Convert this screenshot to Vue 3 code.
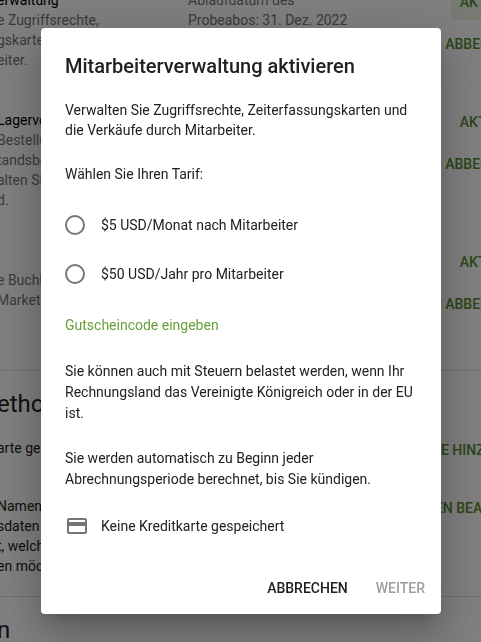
<script setup>
import { ref } from 'vue'

const plan = ref('')

const plans = [
  { id: 'month', label: '$5 USD/Monat nach Mitarbeiter' },
  { id: 'year', label: '$50 USD/Jahr pro Mitarbeiter' },
]

const addons = [
  {
    title: 'erwaltung',
    text: ['e Zugriffsrechte,', 'gskarten und', 'eiter.'],
    trial: ['Ablaufdatum des', 'Probeabos: 31. Dez. 2022'],
    focused: true,
  },
  { title: 'Lagerverwaltung', text: ['Bestellungen', 'tandsbewertung', 'alten Sie', 'd.'] },
  { title: '', text: ['e Buchhaltung', 'Marketing'] },
]
</script>

<template>
  <div class="app">
    <!-- Settings page behind the dialog -->
    <main class="page" inert>
      <section class="section section--addons">
        <div v-for="(a, i) in addons" :key="i" class="row">
          <div class="row-info">
            <div class="row-title">{{ a.title }}</div>
            <div v-for="line in a.text" :key="line" class="row-line">{{ line }}</div>
          </div>
          <div class="row-trial">
            <div v-for="line in a.trial" :key="line" class="row-line">{{ line }}</div>
          </div>
          <div class="row-actions">
            <button type="button" class="link-btn" :class="{ 'link-btn--focused': a.focused }">Aktivieren</button>
            <button type="button" class="link-btn">Abbestellen</button>
          </div>
        </div>
      </section>

      <section class="section section--billing">
        <h2 class="section-title">ethode</h2>
        <div class="pay-row">
          <p class="pay-text">arte gespeichert</p>
          <button type="button" class="link-btn">Kreditkarte hinzufügen</button>
        </div>
        <div class="pay-row">
          <p class="pay-text">Namen<br>sdaten<br>t, welche<br>en möchten</p>
          <button type="button" class="link-btn">Rechnungsdaten bearbeiten</button>
        </div>
      </section>

      <section class="section section--last">
        <h2 class="section-title">n</h2>
      </section>
    </main>

    <!-- Dialog -->
    <div class="backdrop">
      <form class="dialog" role="dialog" aria-modal="true" aria-labelledby="dialog-title" @submit.prevent>
        <div class="dialog-body">
          <h1 id="dialog-title" class="dialog-title">Mitarbeiterverwaltung aktivieren</h1>
          <p class="intro">Verwalten Sie Zugriffsrechte, Zeiterfassungskarten und die Verkäufe durch Mitarbeiter.</p>

          <fieldset class="plans">
            <legend class="plans-legend">Wählen Sie Ihren Tarif:</legend>
            <div class="plans-list">
              <label v-for="p in plans" :key="p.id" class="plan" :for="p.id">
                <input :id="p.id" v-model="plan" class="plan-radio" type="radio" name="plan" :value="p.id">
                <span>{{ p.label }}</span>
              </label>
            </div>
          </fieldset>

          <a class="coupon" href="#">Gutscheincode eingeben</a>

          <p class="note">Sie können auch mit Steuern belastet werden, wenn Ihr Rechnungsland das Vereinigte Königreich oder in der EU ist.</p>
          <p class="note">Sie werden automatisch zu Beginn jeder Abrechnungsperiode berechnet, bis Sie kündigen.</p>

          <div class="card-info">
            <svg width="24" height="24" viewBox="0 0 24 24" fill="currentColor" aria-hidden="true">
              <path d="M20 4H4c-1.11 0-1.99.89-1.99 2L2 18c0 1.11.89 2 2 2h16c1.11 0 2-.89 2-2V6c0-1.11-.89-2-2-2zm0 14H4v-6h16v6zm0-10H4V6h16v2z" />
            </svg>
            <span>Keine Kreditkarte gespeichert</span>
          </div>
        </div>

        <div class="dialog-actions">
          <button type="button" class="btn">Abbrechen</button>
          <button type="submit" class="btn" :disabled="!plan">Weiter</button>
        </div>
      </form>
    </div>
  </div>
</template>

<style>
body {
  background: #fff;
  overflow: hidden;
}
</style>

<style scoped>
.app {
  height: 100vh;
  overflow: hidden;
  font-family: Roboto, "Liberation Sans", sans-serif;
  font-size: 14px;
  line-height: 20px;
  color: #212121;
}

.app *,
.app *::before {
  box-sizing: border-box;
}

h1, h2, p {
  margin: 0;
}

button {
  font: inherit;
  font-weight: 500;
  text-transform: uppercase;
  white-space: nowrap;
  background: transparent;
  border: 0;
  border-radius: 2px;
  cursor: pointer;
}

/* ── Page ────────────────────────────────────────────────────── */
.page {
  margin: 0 -66px 0 -3px;
}

.section {
  border-bottom: 1px solid #e0e0e0;
}

.section--addons {
  display: flex;
  flex-direction: column;
  margin-top: -16px;
}

.section--billing {
  padding: 17px 0 20px;
}

.section--last {
  padding-top: 17px;
  border-bottom: 0;
}

.section-title {
  font-size: 24px;
  line-height: 32px;
  font-weight: 400;
}

.row {
  display: flex;
  min-height: 140px;
}

.row:first-child {
  min-height: 120px;
}

.row:last-child {
  min-height: 126px;
}

.row-info {
  width: 191px;
  padding-top: 6px;
}

.row-title {
  height: 20px;
  color: #000;
}

.row-line {
  color: #757575;
}

.row-trial {
  flex: 1;
  padding-top: 6px;
}

.row-actions {
  display: flex;
  flex-direction: column;
  align-items: flex-end;
  gap: 6px;
}

.link-btn {
  height: 36px;
  padding: 0 9px;
  color: #558b2f;
}

.link-btn--focused {
  background: #edf4e7;
}

.pay-row {
  display: flex;
  justify-content: space-between;
  align-items: flex-start;
  padding-top: 12px;
}

.pay-row + .pay-row {
  padding-top: 22px;
}

.pay-text {
  padding-top: 6px;
}

/* ── Dialog ──────────────────────────────────────────────────── */
.backdrop {
  position: fixed;
  inset: 0;
  display: flex;
  align-items: center;
  justify-content: center;
  padding: 0 16px 0 17px;
  background: rgba(0, 0, 0, 0.5);
}

.dialog {
  width: 100%;
  max-width: 400px;
  background: #fff;
  border-radius: 4px;
  box-shadow:
    0 11px 15px -7px rgba(0, 0, 0, 0.2),
    0 24px 38px 3px rgba(0, 0, 0, 0.14),
    0 9px 46px 8px rgba(0, 0, 0, 0.12);
}

.dialog-body {
  padding: 24px 24px 0;
}

.dialog-title {
  font-size: 20px;
  line-height: 28px;
  font-weight: 500;
}

.intro {
  margin-top: 20px;
}

.plans {
  margin: 24px 0 0;
  padding: 0;
  border: 0;
}

.plans-legend {
  padding: 0;
}

.plans-list {
  display: flex;
  flex-direction: column;
  gap: 1px;
  padding: 17px 0;
}

.plan {
  display: flex;
  align-items: center;
  gap: 16px;
  height: 48px;
  cursor: pointer;
}

.plan-radio {
  appearance: none;
  display: grid;
  place-items: center;
  width: 20px;
  height: 20px;
  margin: 0;
  border: 2px solid #757575;
  border-radius: 50%;
}

.plan-radio:checked {
  border-color: #689f38;
}

.plan-radio:checked::before {
  content: "";
  width: 10px;
  height: 10px;
  border-radius: 50%;
  background: #689f38;
}

.coupon {
  display: block;
  color: #689f38;
  text-decoration: none;
}

.note {
  margin-top: 24px;
  line-height: 21px;
}

.coupon + .note {
  margin-top: 26px;
}

.card-info {
  display: flex;
  align-items: center;
  gap: 12px;
  margin-top: 24px;
}

.card-info svg {
  color: #757575;
}

.dialog-actions {
  display: flex;
  justify-content: flex-end;
  gap: 12px;
  padding: 32px 8px 8px;
}

.btn {
  height: 36px;
  padding: 0 8px;
  color: #212121;
}

.btn:disabled {
  color: #9e9e9e;
  cursor: default;
}
</style>
